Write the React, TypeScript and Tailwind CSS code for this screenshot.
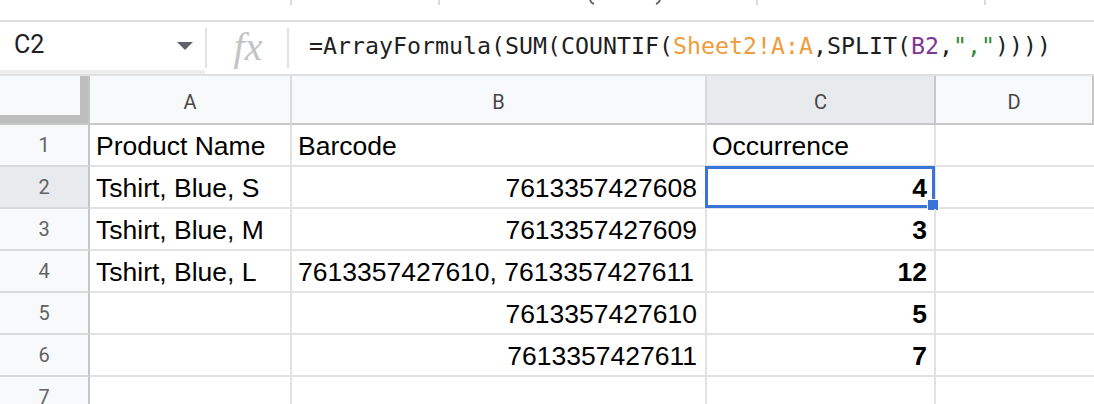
import { JSX } from "react";

type Row = {
  a: string;
  b: string;
  c: string;
  bRight?: boolean;
  cBold?: boolean;
};

const rows: Row[] = [
  { a: "Product Name", b: "Barcode", c: "Occurrence" },
  { a: "Tshirt, Blue, S", b: "7613357427608", c: "4", bRight: true, cBold: true },
  { a: "Tshirt, Blue, M", b: "7613357427609", c: "3", bRight: true, cBold: true },
  { a: "Tshirt, Blue, L", b: "7613357427610, 7613357427611", c: "12", cBold: true },
  { a: "", b: "7613357427610", c: "5", bRight: true, cBold: true },
  { a: "", b: "7613357427611", c: "7", bRight: true, cBold: true },
  { a: "", b: "", c: "" },
];

const cellText =
  "flex items-end pb-[4px] px-[6px] text-[26.5px] leading-[30px] text-black font-['Liberation_Sans',Arial,sans-serif] whitespace-nowrap overflow-hidden";

const Toolbar = (): JSX.Element => (
  <div className="flex h-[22px] border-b-2 border-[#dadce0] bg-white">
    <div className="w-[290px]" />
    <div className="w-[2px] h-[5px] bg-[#dadce0]" />
    <div className="w-[146px]" />
    <div className="w-[2px] h-[5px] bg-[#dadce0]" />
    <div className="w-[148px]" />
    <svg width="8" height="5" viewBox="0 0 8 5">
      <path d="M2 0 Q3 3 6 4" stroke="#5f6368" strokeWidth="2" fill="none" />
    </svg>
    <div className="w-[58px]" />
    <svg width="8" height="5" viewBox="0 0 8 5">
      <path d="M6 0 Q5 3 2 4" stroke="#5f6368" strokeWidth="2" fill="none" />
    </svg>
    <div className="w-[94px]" />
    <div className="w-[2px] h-[5px] bg-[#dadce0]" />
    <div className="w-[226px]" />
    <div className="w-[2px] h-[5px] bg-[#dadce0]" />
  </div>
);

const FormulaBar = (): JSX.Element => (
  <div className="flex h-[54px] border-b-2 border-[#e0e0e0] bg-white">
    <div className="flex items-center w-[205px] pl-[14px] pr-[12px] border-b-[4px] border-[#eeeeee]">
      <span className="flex-1 pb-[2px] text-[25px] text-[#202124] font-['Roboto',sans-serif]">C2</span>
      <svg width="16" height="8" viewBox="0 0 16 8">
        <path d="M0 0 L16 0 L8 8 Z" fill="#5f6368" />
      </svg>
    </div>
    <div className="flex items-center w-[84px] py-[6px]">
      <div className="w-[2px] h-full bg-[#e3e3e3]" />
      <span className="flex-1 text-center pb-[2px] pl-[2px] text-[40px] leading-none italic text-[#c4c4c4] font-['Liberation_Serif',serif]">
        fx
      </span>
      <div className="w-[2px] h-full bg-[#e3e3e3]" />
    </div>
    <div className="flex items-center pl-[20px] pb-[4px] text-[23.25px] text-[#1f1f1f] whitespace-nowrap font-['DejaVu_Sans_Mono',monospace]">
      <span>=ArrayFormula(SUM(COUNTIF(</span>
      <span className="text-[#ef9c3c]">Sheet2!A:A</span>
      <span>,SPLIT(</span>
      <span className="text-[#7e3794]">B2</span>
      <span>,</span>
      <span className="text-[#2e8b35]">","</span>
      <span>))))</span>
    </div>
  </div>
);

const ColumnHeaders = (): JSX.Element => {
  const headerText =
    "flex items-center justify-center pt-[5px] text-[20px] text-[#474747] font-['Roboto',sans-serif] border-r-2 border-b-2 border-[#c7c7c7]";
  return (
    <div className="flex h-[49px]">
      <div className="w-[90px] border-r-2 border-b-2 border-[#c4c7c5] bg-[#f8f9fa]">
        <div className="h-full border-r-[8px] border-b-[8px] border-[#bdbdbd]" />
      </div>
      <div className={`${headerText} w-[202px] bg-[#f8f9fa] border-r-[#dadada]`}>A</div>
      <div className={`${headerText} w-[415px] bg-[#f8f9fa] border-r-[#dadada]`}>B</div>
      <div className={`${headerText} w-[229px] bg-[#e8eaed] border-r-[#c7c7c7]`}>C</div>
      <div className={`${headerText} flex-1 bg-[#f8f9fa] border-r-0`}>D</div>
    </div>
  );
};

const SheetRow = ({ row, index }: { row: Row; index: number }): JSX.Element => {
  const selected = index === 2;
  return (
    <div className="flex h-[42px] shrink-0">
      <div
        className={`flex items-center justify-center w-[90px] border-r-2 border-r-[#c4c7c5] border-b-2 border-b-[#d9d9d9] text-[20px] text-[#5f6368] font-['Roboto',sans-serif] ${
          selected ? "bg-[#e8eaed]" : "bg-[#f8f9fa]"
        }`}
      >
        {index}
      </div>
      <div className={`${cellText} w-[202px] border-r-2 border-b-2 border-[#e2e2e2]`}>{row.a}</div>
      <div
        className={`${cellText} w-[415px] border-r-2 border-b-2 border-[#e2e2e2] ${
          row.bRight ? "justify-end pr-[8px]" : ""
        }`}
      >
        {row.b}
      </div>
      <div
        className={`${cellText} relative overflow-visible w-[229px] border-r-2 border-b-2 border-[#e2e2e2] ${
          row.cBold ? "justify-end font-bold pr-[7px]" : "pl-[5px]"
        }`}
      >
        {row.c}
        {selected && (
          <>
            <div className="absolute left-[-2px] top-[-1px] right-[-1px] bottom-[-1px] border-[3px] border-[#3b74d9]" />
            <div className="absolute right-[-5px] bottom-[-4px] w-[12px] h-[12px] bg-[#3b74d9] border border-white" />
          </>
        )}
      </div>
      <div className="flex-1 border-b-2 border-[#e2e2e2]" />
    </div>
  );
};

export default function App(): JSX.Element {
  return (
    <div className="w-[1094px] h-[404px] overflow-hidden bg-white">
      <Toolbar />
      <FormulaBar />
      <ColumnHeaders />
      {rows.map((row, i) => (
        <SheetRow key={i} row={row} index={i + 1} />
      ))}
    </div>
  );
}
